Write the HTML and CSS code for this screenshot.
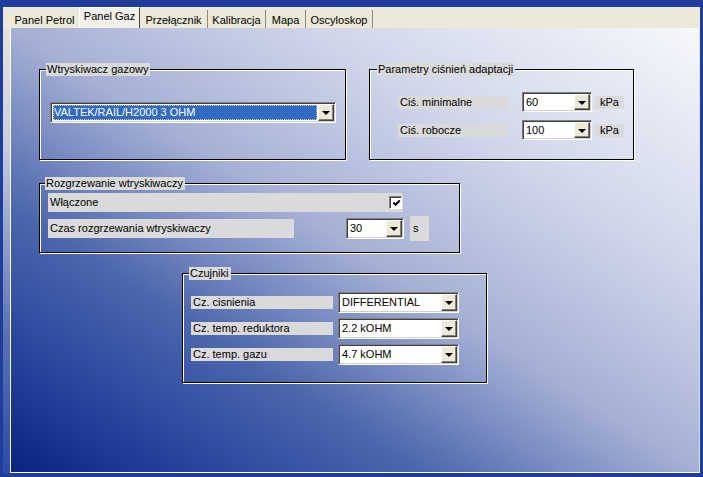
FILE: index.html
```html
<!DOCTYPE html>
<html>
<head>
<meta charset="utf-8">
<link rel="stylesheet" href="styles.css">
</head>
<body>
<div class="window">
  <div class="tabs">
    <div class="tab t1">Panel Petrol</div>
    <div class="tab t2 active">Panel Gaz</div>
    <div class="tab t3">Przełącznik</div>
    <div class="tab t4">Kalibracja</div>
    <div class="tab t5">Mapa</div>
    <div class="tab t6">Oscyloskop</div>
  </div>
  <div class="panel">
    <div class="row-top">
      <fieldset class="group g1">
        <legend>Wtryskiwacz gazowy</legend>
        <div class="gbody g1-body">
          <div class="combo combo-wide">
            <span class="value selected">VALTEK/RAIL/H2000 3 OHM</span>
            <span class="drop"><i></i></span>
          </div>
        </div>
      </fieldset>
      <fieldset class="group g2">
        <legend>Parametry ciśnień adaptacji</legend>
        <div class="gbody g2-body">
          <div class="prow">
            <span class="label lbl-p">Ciś. minimalne</span>
            <div class="combo combo-p"><span class="value">60</span><span class="drop"><i></i></span></div>
            <span class="unit">kPa</span>
          </div>
          <div class="prow">
            <span class="label lbl-p">Ciś. robocze</span>
            <div class="combo combo-p"><span class="value">100</span><span class="drop"><i></i></span></div>
            <span class="unit">kPa</span>
          </div>
        </div>
      </fieldset>
    </div>

    <div class="row-mid">
      <fieldset class="group g3">
        <legend>Rozgrzewanie wtryskiwaczy</legend>
        <div class="gbody g3-body">
          <div class="bar bar-check">
            <span>Włączone</span>
            <span class="check"><svg width="9" height="9" viewBox="0 0 9 9"><path d="M1.5 3.5 L3.5 5.8 L7.8 1.5" fill="none" stroke="#000" stroke-width="2"/></svg></span>
          </div>
          <div class="hrow">
            <span class="bar bar-time">Czas rozgrzewania wtryskiwaczy</span>
            <div class="combo combo-s"><span class="value">30</span><span class="drop"><i></i></span></div>
            <span class="unit-s">s</span>
          </div>
        </div>
      </fieldset>
    </div>

    <div class="row-bottom">
      <fieldset class="group g4">
        <legend>Czujniki</legend>
        <div class="gbody g4-body">
          <div class="crow">
            <span class="label lbl-c">Cz. cisnienia</span>
            <div class="combo combo-c"><span class="value">DIFFERENTIAL</span><span class="drop"><i></i></span></div>
          </div>
          <div class="crow">
            <span class="label lbl-c">Cz. temp. reduktora</span>
            <div class="combo combo-c"><span class="value">2.2 kOHM</span><span class="drop"><i></i></span></div>
          </div>
          <div class="crow">
            <span class="label lbl-c">Cz. temp. gazu</span>
            <div class="combo combo-c"><span class="value">4.7 kOHM</span><span class="drop"><i></i></span></div>
          </div>
        </div>
      </fieldset>
    </div>
  </div>
</div>
</body>
</html>
```

FILE: styles.css
```css
* { box-sizing: border-box; }
html, body { margin: 0; padding: 0; }
body {
  width: 703px;
  height: 477px;
  overflow: hidden;
  background: #1f3e9c;
  font-family: "Liberation Sans", Arial, sans-serif;
  font-size: 11px;
  color: #000;
}
.window {
  height: 477px;
  padding: 7px 3px 4px 3px;
  display: flex;
  flex-direction: column;
  background: linear-gradient(to bottom, #ece9d8 0%, #c9cde0 30%, #5a72b4 70%, #2a4aa6 100%);
  background-clip: content-box;
}
.tabs {
  height: 21px;
  flex: none;
  background: #ece9d8;
  display: flex;
  align-items: flex-end;
  padding-left: 7px;
}
.tab {
  height: 18px;
  padding-top: 4px;
  line-height: 13px;
  text-align: center;
  white-space: nowrap;
  border-right: 1px solid #8d8a7e;
}
.tab.active {
  height: 21px;
  padding-top: 2px;
  background: #f1efe6;
  border-left: 1px solid #fff;
  border-top: 1px solid #fff;
  border-right: 1px solid #404040;
}
.t1 { width: 69px; border-right: none; }
.t2 { width: 61px; }
.t3 { width: 68px; }
.t4 { width: 58px; }
.t5 { width: 40px; }
.t6 { width: 67px; }

.panel {
  flex: 1;
  margin-left: 7px;
  border-left: 1px solid #fff;
  border-bottom: 1px solid #fff;
  border-right: 1px solid #dfe3ef;
  background: linear-gradient(to top right,
    #08237f 0%, #22409a 12%, #4c67ad 30%, #7a8cc2 40%,
    #a5b0d5 50%, #d0d6ea 72%, #f7f8fc 100%);
}

.row-top { display: flex; gap: 23px; padding: 35px 0 0 28px; }
.row-mid { padding: 17px 0 0 28px; }
.row-bottom { padding: 14px 0 0 171px; }

.group {
  margin: 0;
  padding: 0;
  min-width: 0;
  border: 1px solid #000;
  box-shadow: 1px 1px 0 #fff, inset 1px 1px 0 #fff;
}
.group legend {
  margin-left: 6px;
  padding: 0 2px 0 1px;
  height: 13px;
  line-height: 13px;
  background: #dadada;
  white-space: nowrap;
}
.g1 { width: 307px; }
.g2 { width: 265px; }
.g2 legend { margin-left: 7px; }
.g3 { width: 421px; }
.g3 legend { margin-left: 5px; }
.g4 { width: 305px; }

.g1-body { padding: 26px 0 36px 10px; }
.g2-body { padding: 16px 0 19px 28px; display: flex; flex-direction: column; gap: 8px; }
.g3-body { padding: 3px 0 11px 8px; }
.g4-body { padding: 12px 0 17px 8px; display: flex; flex-direction: column; gap: 5px; }

.label {
  height: 13px;
  line-height: 13px;
  padding-left: 2px;
  background: #dadada;
  white-space: nowrap;
  overflow: hidden;
}
.lbl-p { width: 110px; margin-right: 14px; }
.lbl-c { width: 142px; margin-right: 5px; }

.prow { display: flex; align-items: center; height: 20px; }
.crow { display: flex; align-items: center; height: 21px; }

.unit {
  margin-left: 3px;
  width: 29px;
  height: 13px;
  line-height: 13px;
  padding-left: 5px;
  background: #dadada;
}

.combo {
  display: flex;
  height: 21px;
  padding: 1px;
  background: #fff;
  border: 1px solid;
  border-color: #808080 #fff #fff #808080;
  box-shadow: inset 1px 1px 0 #404040, inset -1px -1px 0 #d4d0c8;
}
.combo-wide { width: 286px; }
.combo-p { width: 70px; height: 20px; }
.combo-s { width: 58px; margin-left: 52px; }
.combo-c { width: 121px; }
.combo .value {
  flex: 1;
  padding-left: 2px;
  line-height: 15px;
  margin: 1px 1px 1px 0;
  white-space: nowrap;
  overflow: hidden;
}
.combo .value.selected {
  background: #316ac5;
  color: #fff;
  outline: 1px dotted #d8c890;
  outline-offset: -1px;
  margin: 1px 1px 1px 1px;
  padding-left: 1px;
}
.drop {
  width: 16px;
  flex: none;
  display: flex;
  align-items: center;
  justify-content: center;
  background: #ece9d8;
  border: 1px solid;
  border-color: #fff #404040 #404040 #fff;
  box-shadow: inset -1px -1px 0 #808080;
}
.drop i {
  width: 0;
  height: 0;
  border-left: 4px solid transparent;
  border-right: 4px solid transparent;
  border-top: 4px solid #000;
  margin-top: 1px;
}

.bar {
  height: 19px;
  line-height: 19px;
  padding-left: 2px;
  background: #dadada;
  white-space: nowrap;
}
.bar-check {
  width: 355px;
  display: flex;
  align-items: center;
  justify-content: space-between;
  padding-right: 1px;
}
.check {
  width: 13px;
  height: 13px;
  background: #fff;
  border: 1px solid;
  border-color: #808080 #fff #fff #808080;
  box-shadow: inset 1px 1px 0 #404040;
  display: flex;
  align-items: center;
  justify-content: center;
  padding: 1px 0 0 1px;
}
.hrow { display: flex; align-items: center; height: 25px; margin-top: 4px; }
.bar-time { width: 246px; }
.unit-s {
  margin-left: 6px;
  width: 19px;
  height: 25px;
  line-height: 25px;
  padding-left: 3px;
  background: #dadada;
}
```
